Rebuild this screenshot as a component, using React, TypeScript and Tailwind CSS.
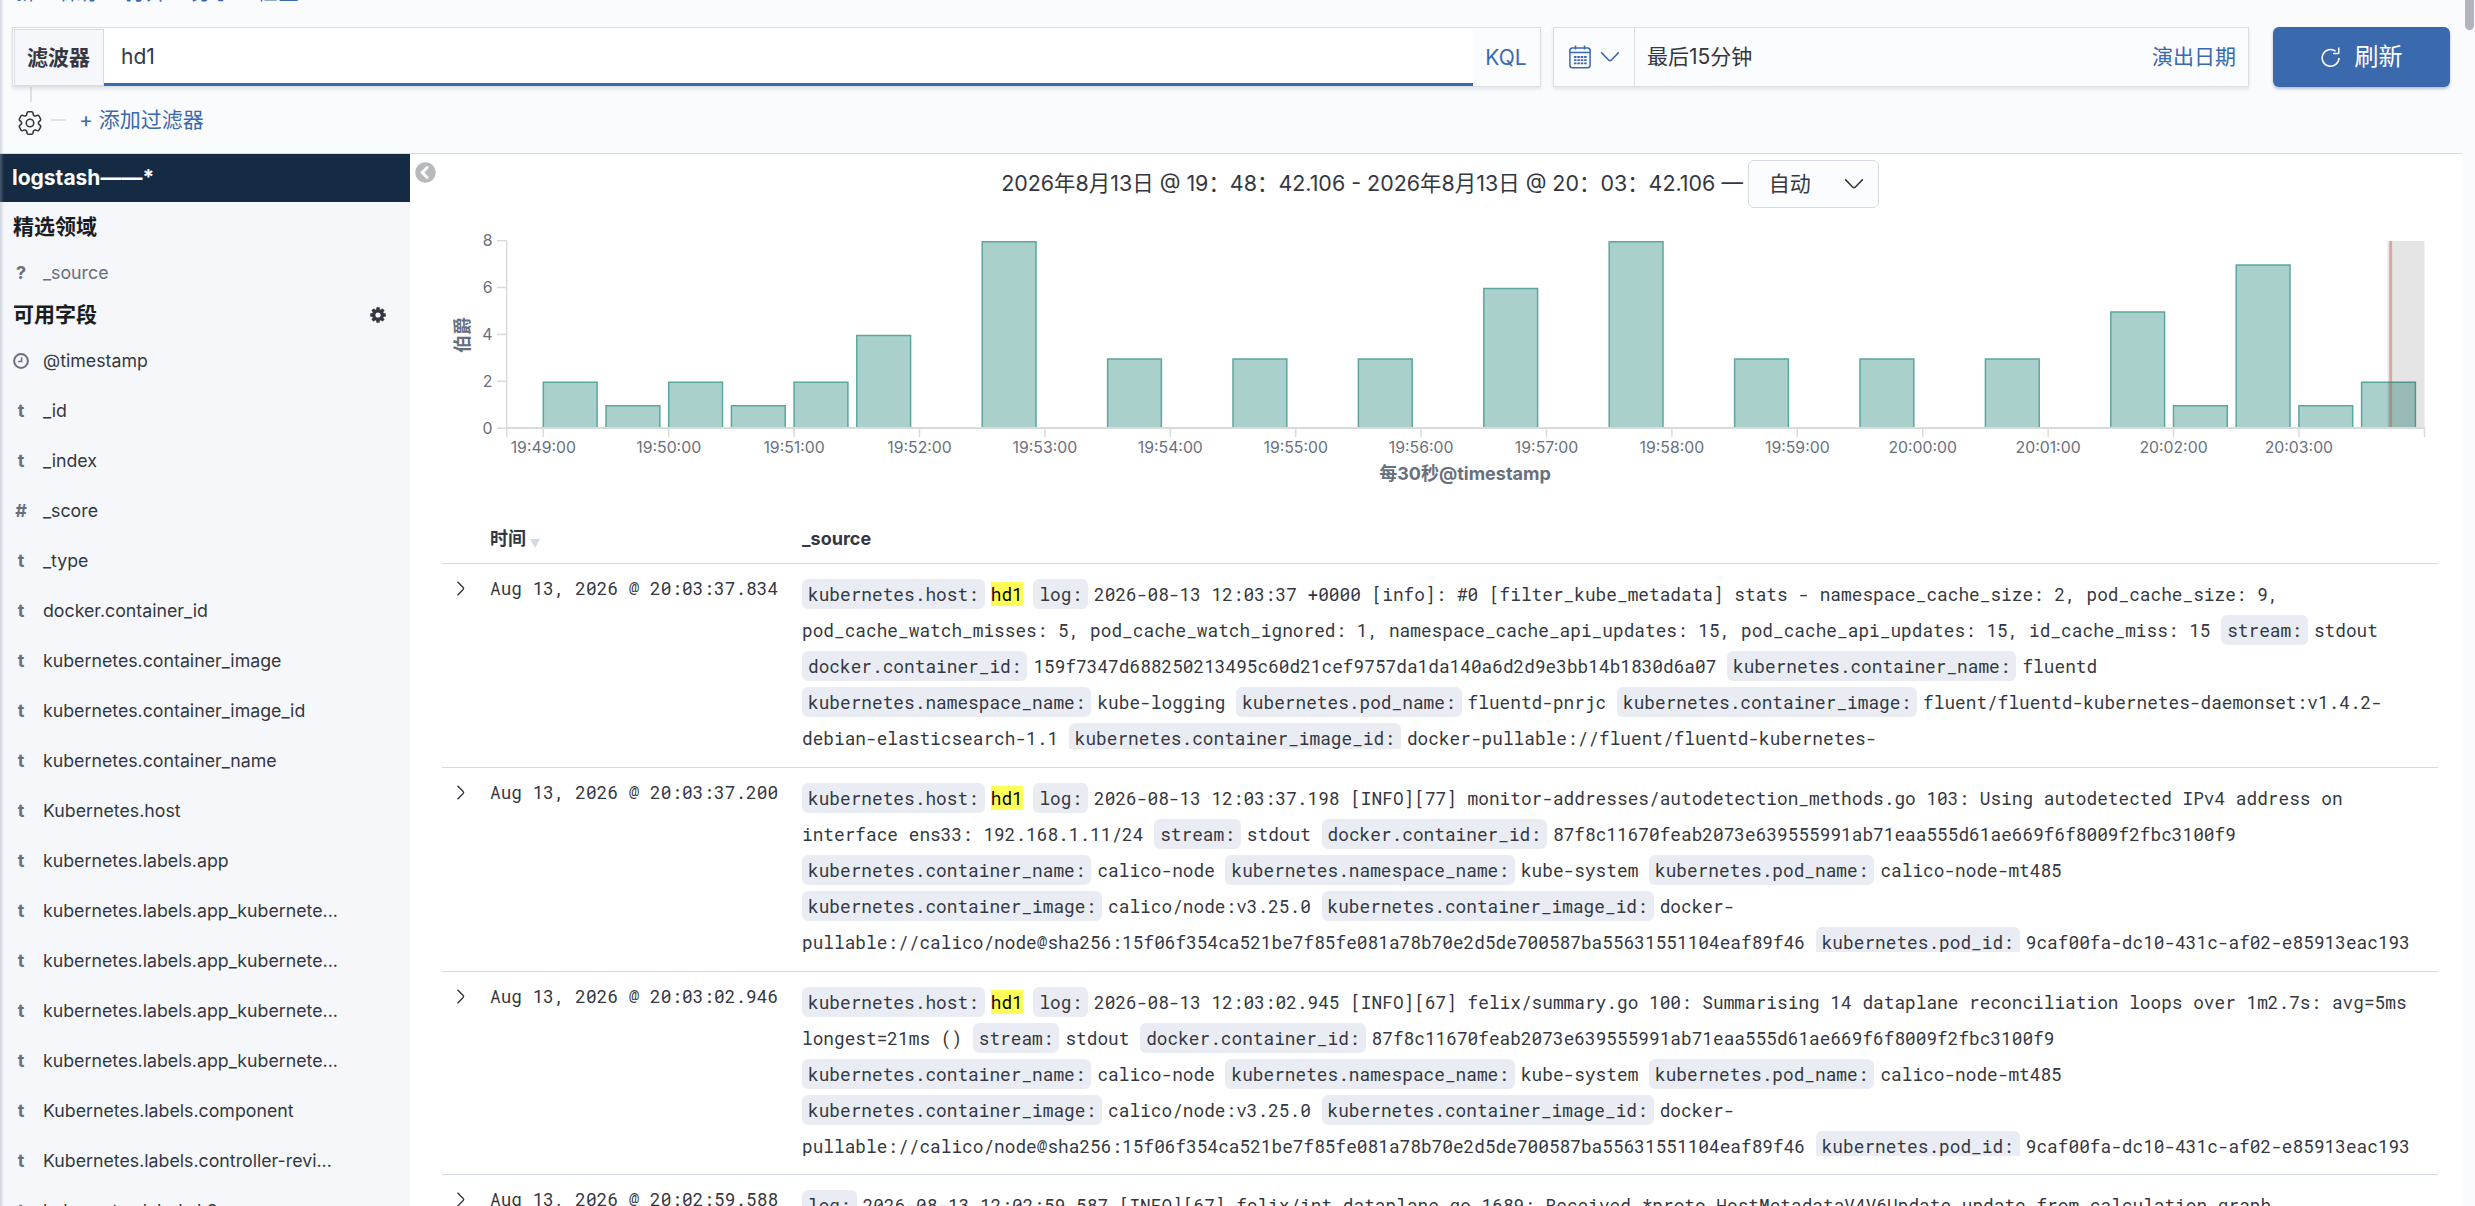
import { FaChevronCircleLeft } from 'react-icons/fa';
import { HiOutlineCog6Tooth } from 'react-icons/hi2';

type Field = {
  type: string;
  name: string;
};

type Hit = {
  time: string;
  lines: string[];
};

const menu = ['新', '保存', '打开', '分享', '检查'];

const fields: Field[] = [
  { type: 'date', name: '@timestamp' },
  { type: 't', name: '_id' },
  { type: 't', name: '_index' },
  { type: '#', name: '_score' },
  { type: 't', name: '_type' },
  { type: 't', name: 'docker.container_id' },
  { type: 't', name: 'kubernetes.container_image' },
  { type: 't', name: 'kubernetes.container_image_id' },
  { type: 't', name: 'kubernetes.container_name' },
  { type: 't', name: 'Kubernetes.host' },
  { type: 't', name: 'kubernetes.labels.app' },
  { type: 't', name: 'kubernetes.labels.app_kubernete...' },
  { type: 't', name: 'kubernetes.labels.app_kubernete...' },
  { type: 't', name: 'kubernetes.labels.app_kubernete...' },
  { type: 't', name: 'kubernetes.labels.app_kubernete...' },
  { type: 't', name: 'Kubernetes.labels.component' },
  { type: 't', name: 'Kubernetes.labels.controller-revi...' },
  { type: 't', name: 'kubernetes.labels.k8s-app' },
];

// {key:} is a field badge, *text* is a highlighted match
const hits: Hit[] = [
  {
    time: 'Aug 13, 2026 @ 20:03:37.834',
    lines: [
      '{kubernetes.host:}*hd1* {log:}2026-08-13 12:03:37 +0000 [info]: #0 [filter_kube_metadata] stats - namespace_cache_size: 2, pod_cache_size: 9,',
      'pod_cache_watch_misses: 5, pod_cache_watch_ignored: 1, namespace_cache_api_updates: 15, pod_cache_api_updates: 15, id_cache_miss: 15 {stream:}stdout',
      '{docker.container_id:}159f7347d688250213495c60d21cef9757da1da140a6d2d9e3bb14b1830d6a07 {kubernetes.container_name:}fluentd',
      '{kubernetes.namespace_name:}kube-logging {kubernetes.pod_name:}fluentd-pnrjc {kubernetes.container_image:}fluent/fluentd-kubernetes-daemonset:v1.4.2-',
      'debian-elasticsearch-1.1 {kubernetes.container_image_id:}docker-pullable://fluent/fluentd-kubernetes-',
    ],
  },
  {
    time: 'Aug 13, 2026 @ 20:03:37.200',
    lines: [
      '{kubernetes.host:}*hd1* {log:}2026-08-13 12:03:37.198 [INFO][77] monitor-addresses/autodetection_methods.go 103: Using autodetected IPv4 address on',
      'interface ens33: 192.168.1.11/24 {stream:}stdout {docker.container_id:}87f8c11670feab2073e639555991ab71eaa555d61ae669f6f8009f2fbc3100f9',
      '{kubernetes.container_name:}calico-node {kubernetes.namespace_name:}kube-system {kubernetes.pod_name:}calico-node-mt485',
      '{kubernetes.container_image:}calico/node:v3.25.0 {kubernetes.container_image_id:}docker-',
      'pullable://calico/node@sha256:15f06f354ca521be7f85fe081a78b70e2d5de700587ba55631551104eaf89f46 {kubernetes.pod_id:}9caf00fa-dc10-431c-af02-e85913eac193',
    ],
  },
  {
    time: 'Aug 13, 2026 @ 20:03:02.946',
    lines: [
      '{kubernetes.host:}*hd1* {log:}2026-08-13 12:03:02.945 [INFO][67] felix/summary.go 100: Summarising 14 dataplane reconciliation loops over 1m2.7s: avg=5ms',
      'longest=21ms () {stream:}stdout {docker.container_id:}87f8c11670feab2073e639555991ab71eaa555d61ae669f6f8009f2fbc3100f9',
      '{kubernetes.container_name:}calico-node {kubernetes.namespace_name:}kube-system {kubernetes.pod_name:}calico-node-mt485',
      '{kubernetes.container_image:}calico/node:v3.25.0 {kubernetes.container_image_id:}docker-',
      'pullable://calico/node@sha256:15f06f354ca521be7f85fe081a78b70e2d5de700587ba55631551104eaf89f46 {kubernetes.pod_id:}9caf00fa-dc10-431c-af02-e85913eac193',
    ],
  },
  {
    time: 'Aug 13, 2026 @ 20:02:59.588',
    lines: [
      '{log:}2026-08-13 12:02:59.587 [INFO][67] felix/int_dataplane.go 1689: Received *proto.HostMetadataV4V6Update update from calculation graph',
    ],
  },
];

// [30s bucket counted from 19:49:00, hits]
const buckets = [
  [0, 2], [1, 1], [2, 2], [3, 1], [4, 2], [5, 4], [7, 8], [9, 3], [11, 3], [13, 3],
  [15, 6], [17, 8], [19, 3], [21, 3], [23, 3], [25, 5], [26, 1], [27, 7], [28, 1], [29, 2],
];

const minutes = [
  '19:49:00', '19:50:00', '19:51:00', '19:52:00', '19:53:00', '19:54:00', '19:55:00', '19:56:00',
  '19:57:00', '19:58:00', '19:59:00', '20:00:00', '20:01:00', '20:02:00', '20:03:00',
];

const X0 = 101.3;
const STEP = 62.7;
const Y0 = 208.5;
const UNIT = 23.44;

function CalendarIcon() {
  return (
    <svg width="22" height="24" viewBox="0 0 22 24" fill="none" stroke="#3b69ae" strokeWidth="1.5">
      <rect x="0.9" y="3" width="20.2" height="19.8" rx="2.5" />
      <path d="M1 7.6h20M6.5 0.5v4M15.5 0.5v4" />
      <path d="M4.9 12h12.8M4.9 15.2h12.8M4.9 18.4h12.8" strokeWidth="1.8" strokeDasharray="2.6 0.8" />
    </svg>
  );
}

function ChevronDown({ color }: { color: string }) {
  return (
    <svg width="20" height="12" viewBox="0 0 20 12" fill="none" stroke={color} strokeWidth="1.6">
      <path d="M1.2 1.4l7.6 7.8q1.2 1 2.4 0l7.6-7.8" />
    </svg>
  );
}

function RefreshIcon() {
  return (
    <svg width="20" height="21" viewBox="0 0 20 21" fill="none" stroke="#fff" strokeWidth="1.5">
      <path d="M14.6 4.1A8.4 8.4 0 1 0 18 11" />
      <path d="M17.8 0.5v5.2q0 0.9-0.9 0.9h-4.9" />
    </svg>
  );
}

function SolidGear() {
  return (
    <svg width="16" height="16" viewBox="0 0 16 16" fill="#343741">
      {[0, 45, 90, 135].map((a) => (
        <rect key={a} x="6.3" y="0.2" width="3.4" height="15.6" rx="0.6" transform={`rotate(${a} 8 8)`} />
      ))}
      <circle cx="8" cy="8" r="6" />
      <circle cx="8" cy="8" r="2.6" fill="#f5f7fa" />
    </svg>
  );
}

function FieldIcon({ type }: { type: string }) {
  if (type === 'date') {
    return (
      <svg width="16" height="16" viewBox="0 0 16 16" fill="none" stroke="#69707d">
        <circle cx="8" cy="8" r="6.9" strokeWidth="2" />
        <path d="M8.6 4.2v4.4H5.2" strokeWidth="1.5" />
      </svg>
    );
  }
  return <span className="text-lg font-bold">{type}</span>;
}

function FieldRow({ field, muted }: { field: Field; muted?: boolean }) {
  return (
    <li className="flex h-[50px] items-center">
      <span className="flex w-4 justify-center text-[#69707d]">
        <FieldIcon type={field.type} />
      </span>
      <span className={muted ? 'ml-[14px] text-[17.75px] text-[#69707d]' : 'ml-[14px] text-[17.75px]'}>
        {field.name}
      </span>
    </li>
  );
}

function Sidebar() {
  return (
    <aside className="w-[410px] shrink-0 bg-[#f5f7fa]">
      <div className="flex h-12 items-center bg-[#152a43] pl-3 text-[21px] font-bold text-white">logstash——*</div>
      <div className="pl-[13px]">
        <h3 className="flex h-[46px] items-center pt-1 text-[21px] font-bold text-[#1a1c21]">精选领域</h3>
        <ul>
          <FieldRow field={{ type: '?', name: '_source' }} muted />
        </ul>
        <div className="flex h-[38px] items-center justify-between pr-6 pb-1">
          <h3 className="text-[21px] font-bold text-[#1a1c21]">可用字段</h3>
          <SolidGear />
        </div>
        <ul>
          {fields.map((field, i) => (
            <FieldRow key={i} field={field} />
          ))}
        </ul>
      </div>
    </aside>
  );
}

function Histogram() {
  return (
    <svg width="1996" height="270" viewBox="0 0 1996 270" className="block">
      {buckets.map(([slot, count]) => {
        const x = X0 + slot * STEP;
        const y = Y0 - count * UNIT;
        return (
          <path
            key={slot}
            d={`M${x} ${Y0}V${y + 0.7}H${x + 53.8}V${Y0}`}
            fill="#a9d0cb"
            stroke="#5ba79e"
            strokeWidth="1.5"
          />
        );
      })}
      <rect x="1945.5" y="21" width="37" height="187" fill="#000" fillOpacity="0.1" />
      <rect x="1947.3" y="21" width="2.8" height="187" fill="#c8503c" fillOpacity="0.42" />
      <g stroke="#dadada" strokeWidth="1.5">
        <path d="M64.7 20.5V217" />
        <path d="M64 208H1983" strokeWidth="2" />
        <path d="M1982.5 208V217" />
        {[0, 2, 4, 6, 8].map((v) => (
          <path key={v} d={`M55 ${208.2 - v * UNIT}H65`} />
        ))}
        {minutes.map((label, i) => (
          <path key={label} d={`M${X0 + i * 2 * STEP} 208V217`} />
        ))}
      </g>
      <g fill="#69707d" fontSize="15.8">
        {[0, 2, 4, 6, 8].map((v) => (
          <text key={v} x="50.5" y={213.8 - v * UNIT} textAnchor="end">
            {v}
          </text>
        ))}
        {minutes.map((label, i) => (
          <text key={label} x={X0 + i * 2 * STEP} y="232.8" textAnchor="middle">
            {label}
          </text>
        ))}
      </g>
      <g fill="#69707d" fontSize="18" fontWeight="700" textAnchor="middle">
        <text x="1023" y="260">每30秒@timestamp</text>
        <text transform="translate(27 115) rotate(-90)">伯爵</text>
      </g>
    </svg>
  );
}

function SourceLine({ text }: { text: string }) {
  return (
    <div className="h-9 whitespace-pre">
      {text.split(/(\{.*?\}|\*hd1\*)/).map((part, i) => {
        if (part.startsWith('{')) {
          return (
            <span key={i} className="mr-1.5 inline-block h-[30px] rounded-md bg-[#e9edf3] px-1.5 leading-[30px]">
              {part.slice(1, -1)}
            </span>
          );
        }
        if (part === '*hd1*') {
          return (
            <mark key={i} className="bg-[#ffff55] text-black">
              hd1
            </mark>
          );
        }
        return part;
      })}
    </div>
  );
}

function HitRow({ hit }: { hit: Hit }) {
  return (
    <div className="flex h-[203.8px] border-b border-[#d3dae6] font-['Roboto_Mono','DejaVu_Sans_Mono',monospace] text-[17.8px]">
      <div className="w-12 pt-[17px] pl-[14px]">
        <svg width="10" height="15" viewBox="0 0 10 15" fill="none" stroke="#343741" strokeWidth="1.4">
          <path d="M1.5 0.8l5.7 5.8q0.8 0.9 0 1.8l-5.7 5.8" />
        </svg>
      </div>
      <div className="w-[312px] pt-2 leading-[33px] whitespace-pre">{hit.time}</div>
      <div className="mt-3 h-[172.5px] flex-1 overflow-hidden leading-9">
        {hit.lines.map((line, i) => (
          <SourceLine key={i} text={line} />
        ))}
      </div>
    </div>
  );
}

function QueryBar() {
  return (
    <header className="h-[154px] shrink-0 overflow-hidden border-b border-[#d3dae6] bg-[#fafbfd]">
      <nav className="-mt-[20px] flex h-[47px] gap-6 pl-[14px] text-[21px] leading-6 text-[#3b69ae]">
        {menu.map((item) => (
          <span key={item}>{item}</span>
        ))}
      </nav>
      <div className="flex h-[60px] pl-3 text-[21px]">
        <div className="flex w-[1529px] border border-[#dcdfe4] bg-[#fbfcfd] p-px pb-0 shadow-[0_2px_3px_rgba(152,162,179,0.25)]">
          <div className="flex h-[57px] w-[90px] items-center justify-center border border-[#d9dce3] bg-[#f5f7fa] pr-px font-bold">
            滤波器
          </div>
          <div className="flex h-[57px] w-[1369px] items-center border-b-3 border-[#3b69ae] bg-white pt-[2px] pl-[17px]">
            hd1
          </div>
          <div className="flex flex-1 items-center justify-center text-[#3b69ae]">KQL</div>
        </div>
        <div className="ml-3 flex w-[696px] border border-[#dcdfe4] bg-[#fbfcfd] shadow-[0_2px_3px_rgba(152,162,179,0.25)]">
          <div className="flex w-[81px] items-center gap-[9px] border-r border-[#dcdfe4] pl-[15px]">
            <CalendarIcon />
            <ChevronDown color="#3b69ae" />
          </div>
          <div className="flex flex-1 items-center justify-between pr-3 pl-3">
            <span>最后15分钟</span>
            <span className="text-[#3b69ae]">演出日期</span>
          </div>
        </div>
        <button className="ml-6 flex w-[177px] items-center justify-center gap-[14px] rounded-md bg-[#3b69ae] text-2xl text-white shadow-[0_2px_3px_rgba(60,80,120,0.35)]">
          <RefreshIcon />
          刷新
        </button>
      </div>
      <div className="ml-[30px] h-[15px] w-[2px] bg-[#dde1ec]" />
      <div className="flex h-9 items-center pl-[15px]">
        <HiOutlineCog6Tooth size={30} strokeWidth={1.25} className="mt-[5px] text-[#343741]" />
        <span className="ml-[6px] h-[2px] w-[15px] bg-[#dde1ec]" />
        <span className="ml-[13px] text-[21px] text-[#3b69ae]">+ 添加过滤器</span>
      </div>
    </header>
  );
}

export default function App() {
  return (
    <div className="relative flex h-[1206px] w-[2475px] overflow-hidden bg-[#fafbfd] font-['Inter','Noto_Sans_CJK_SC',sans-serif] text-[#343741]">
      <div className="flex w-[2462px] flex-col">
        <QueryBar />
        <div className="flex min-h-0 flex-1 overflow-hidden bg-white">
          <Sidebar />
          <div className="w-8 pt-2 pl-[5px]">
            <FaChevronCircleLeft size={21} color="#b8b9bb" />
          </div>
          <main className="w-[1996px]">
            <div className="flex h-[66px] items-start justify-center pt-[6px] text-[21px]">
              <span className="mt-[7px] text-[21.45px] leading-8 whitespace-pre">
                2026年8月13日 @ 19：48：42.106 - 2026年8月13日 @ 20：03：42.106 —
              </span>
              <div className="ml-[5px] flex h-12 w-[131px] items-center justify-between rounded-md border border-[#d3dae6] bg-[#fbfcfd] pr-[14px] pl-5">
                自动
                <ChevronDown color="#343741" />
              </div>
            </div>
            <Histogram />
            <div className="flex h-[74px] border-b border-[#d3dae6] pt-[35px] pl-12 text-lg font-bold">
              <div className="flex w-[312px] items-start">
                时间
                <svg width="10" height="9" viewBox="0 0 10 9" className="mt-[14px] ml-1">
                  <path d="M0 0h10l-5 9z" fill="#d3dae6" />
                </svg>
              </div>
              <div>_source</div>
            </div>
            {hits.map((hit) => (
              <HitRow key={hit.time} hit={hit} />
            ))}
          </main>
        </div>
      </div>
      <div className="ml-[3px] h-[30px] w-[9px] rounded-b-full bg-[#b1b4bc]" />
      <div className="absolute inset-y-0 left-0 w-1 bg-linear-to-r from-[#98a2b3]/40 to-transparent" />
    </div>
  );
}
